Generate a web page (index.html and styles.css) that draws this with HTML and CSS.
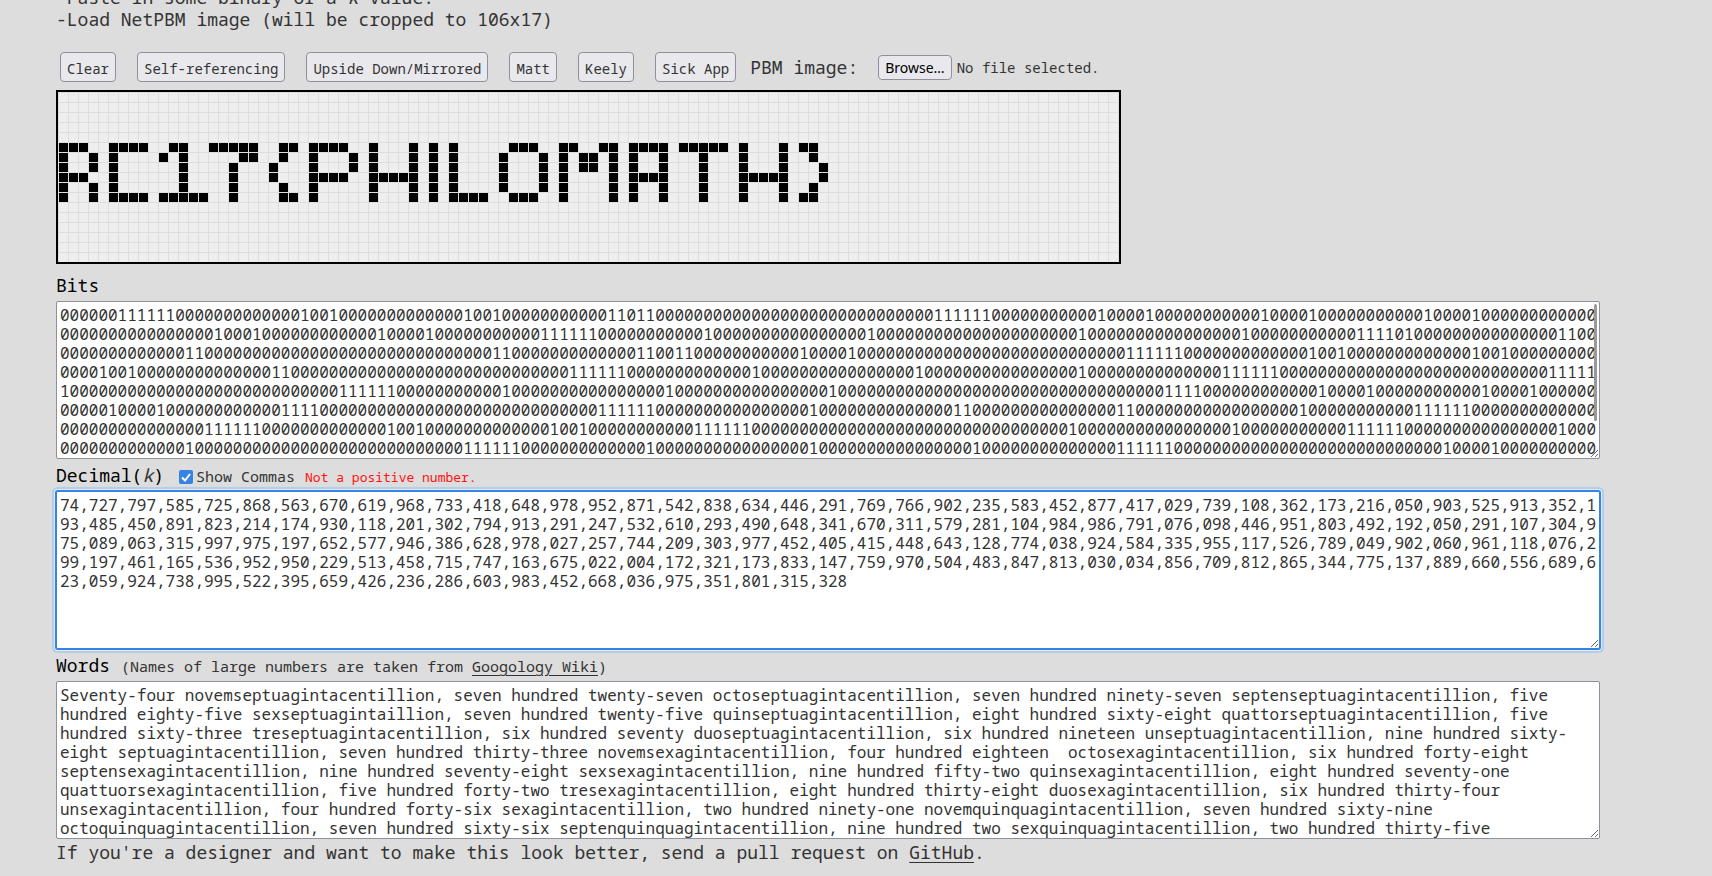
FILE: index.html
```html
<!DOCTYPE html>
<html lang="en">
<head>
<meta charset="utf-8">
<title>Tupper's self-referential formula</title>
<link rel="stylesheet" href="styles.css">
</head>
<body>
<main class="page">
  <div class="intro">
    <div>-Paste in some binary or a <i>k</i> value.</div>
    <div>-Load NetPBM image (will be cropped to 106x17)</div>
  </div>

  <div class="toolbar">
    <button type="button" class="btn">Clear</button>
    <button type="button" class="btn">Self-referencing</button>
    <button type="button" class="btn">Upside Down/Mirrored</button>
    <button type="button" class="btn">Matt</button>
    <button type="button" class="btn">Keely</button>
    <button type="button" class="btn">Sick App</button>
    <div class="file">
      <label class="file-label" for="pbm">PBM image:</label>
      <input type="file" id="pbm" hidden>
      <button type="button" class="browse" id="browse">Browse…</button>
      <span class="file-name">No file selected.</span>
    </div>
  </div>

  <svg class="grid" viewBox="0 0 1061 170" role="img" aria-label="Plot">
    <defs>
      <pattern id="cell" width="10" height="10" patternUnits="userSpaceOnUse">
        <rect width="10" height="10" fill="#ddd"/>
        <rect x="1" y="1" width="9" height="9" fill="#eee"/>
      </pattern>
    </defs>
    <rect width="1061" height="170" fill="url(#cell)"/>
    <path id="pixels" d=""/>
  </svg>

  <div class="heading"><label class="title" for="bits">Bits</label></div>
  <div class="field">
    <textarea class="area numeric" id="bits" spellcheck="false"></textarea>
    <span class="thumb"></span>
  </div>

  <div class="heading">
    <label class="title" for="decimal">Decimal(<i class="var">k</i>)</label>
    <label class="commas"><input type="checkbox" class="check" checked>Show Commas</label>
    <span class="error">Not a positive number.</span>
  </div>
  <div class="field">
    <textarea class="area numeric active" id="decimal" spellcheck="false">74,727,797,585,725,868,563,670,619,968,733,418,648,978,952,871,542,838,634,446,291,769,766,902,235,583,452,877,417,029,739,108,362,173,216,050,903,525,913,352,193,485,450,891,823,214,174,930,118,201,302,794,913,291,247,532,610,293,490,648,341,670,311,579,281,104,984,986,791,076,098,446,951,803,492,192,050,291,107,304,975,089,063,315,997,975,197,652,577,946,386,628,978,027,257,744,209,303,977,452,405,415,448,643,128,774,038,924,584,335,955,117,526,789,049,902,060,961,118,076,299,197,461,165,536,952,950,229,513,458,715,747,163,675,022,004,172,321,173,833,147,759,970,504,483,847,813,030,034,856,709,812,865,344,775,137,889,660,556,689,623,059,924,738,995,522,395,659,426,236,286,603,983,452,668,036,975,351,801,315,328</textarea>
  </div>

  <div class="heading">
    <label class="title" for="words">Words</label>
    <span class="note">(Names of large numbers are taken from <a href="#googology">Googology Wiki</a>)</span>
  </div>
  <div class="field">
    <textarea class="area" id="words" spellcheck="false">Seventy-four novemseptuagintacentillion, seven hundred twenty-seven octoseptuagintacentillion, seven hundred ninety-seven septenseptuagintacentillion, five hundred eighty-five sexseptuagintaillion, seven hundred twenty-five quinseptuagintacentillion, eight hundred sixty-eight quattorseptuagintacentillion, five hundred sixty-three treseptuagintacentillion, six hundred seventy duoseptuagintacentillion, six hundred nineteen unseptuagintacentillion, nine hundred sixty-eight septuagintacentillion, seven hundred thirty-three novemsexagintacentillion, four hundred eighteen  octosexagintacentillion, six hundred forty-eight septensexagintacentillion, nine hundred seventy-eight sexsexagintacentillion, nine hundred fifty-two quinsexagintacentillion, eight hundred seventy-one quattuorsexagintacentillion, five hundred forty-two tresexagintacentillion, eight hundred thirty-eight duosexagintacentillion, six hundred thirty-four unsexagintacentillion, four hundred forty-six sexagintacentillion, two hundred ninety-one novemquinquagintacentillion, seven hundred sixty-nine octoquinquagintacentillion, seven hundred sixty-six septenquinquagintacentillion, nine hundred two sexquinquagintacentillion, two hundred thirty-five</textarea>
  </div>

  <footer class="footer">If you're a designer and want to make this look better, send a pull request on <a href="#github">GitHub</a>.</footer>
</main>
<script src="script.js"></script>
</body>
</html>
```

FILE: styles.css
```css
* {
  box-sizing: border-box;
}

body {
  margin: 0;
  background: #ddd;
  color: #333;
  font-family: "Noto Sans Mono", "Liberation Mono", monospace;
  font-size: 18px;
  line-height: 22px;
}

a {
  color: inherit;
  text-underline-offset: 3px;
}

.page {
  margin: -14px 112px 0 56px;
}

.intro {
  margin-bottom: 22px;
}

.toolbar {
  display: flex;
  align-items: center;
  gap: 21px;
  padding-left: 4px;
  margin-bottom: 8px;
}

.btn,
.browse {
  border: 1px solid #8f8f9d;
  border-radius: 4px;
  background: #e9e9ed;
  color: #333;
  font-family: inherit;
  font-size: 14px;
  white-space: nowrap;
}

.btn {
  height: 30px;
  padding: 2px 6px 0;
}

.file {
  display: flex;
  align-items: center;
  white-space: nowrap;
}

.file-label {
  margin: 0 20px 0 -7px;
}

.browse {
  height: 25px;
  padding: 0 6px;
  color: #000;
  font-family: "Noto Sans", sans-serif;
}

.file-name {
  padding-top: 2px;
  margin-left: 5px;
  font-size: 14px;
}

.grid {
  display: block;
  box-sizing: content-box;
  width: 1061px;
  border: 2px solid #000;
  margin-bottom: 5px;
  shape-rendering: crispEdges;
}

.heading {
  display: flex;
  align-items: baseline;
  height: 32px;
  line-height: 32px;
}

.title {
  color: #000;
}

.var {
  color: #333;
}

.commas {
  margin-left: 15px;
  font-size: 15px;
}

.check {
  appearance: none;
  width: 14px;
  height: 14px;
  margin: 0 3px 0 0;
  border-radius: 2px;
  background: #3584e4 url("data:image/svg+xml,%3Csvg xmlns='http://www.w3.org/2000/svg' viewBox='0 0 14 14'%3E%3Cpath d='M3 7.5l3 3 5-6.500' fill='none' stroke='white' stroke-width='2'/%3E%3C/svg%3E");
  vertical-align: -2px;
}

.error {
  margin-left: 10px;
  color: #f11;
  font-size: 13px;
}

.note {
  margin-left: 11px;
  font-size: 15px;
}

.field {
  position: relative;
}

.area {
  display: block;
  width: 100%;
  height: 158px;
  margin: 0;
  padding: 4px 2px 2px 3px;
  border: 1px solid #8f8f9d;
  border-radius: 2px;
  background: #fff;
  color: #333;
  font-family: inherit;
  font-size: 16px;
  line-height: 19px;
  overflow: hidden;
  resize: both;
}

.numeric {
  line-break: anywhere;
}

.active {
  border-color: #3584e4;
  outline: none;
  box-shadow: 0 0 0 1px #3584e4, 0 0 0 2px #e4eaf2, 0 0 0 4px #b4cdeb;
}

.thumb {
  position: absolute;
  top: 3px;
  right: 3px;
  width: 3px;
  height: 117px;
  border-radius: 2px;
  background: #999;
}

.footer {
  padding-top: 2px;
}
```

FILE: script.js
```js
const COLUMNS = 106;
const ROWS = 17;
const CELL = 10;

// Filled columns of each row, as single columns or inclusive ranges.
const filled = {
  5: "0-2 5-8 11-12 15-19 22-23 25-28 31 35 37 39 45-47 50-51 54-55 57-60 62-66 68 72 74-75",
  6: "0 3 5 10 12 18-19 22 25 29 31 35 37 39 44 48 50 52-53 55 57 60 64 68 72 75",
  7: "0 3 5 12 17 21 25 29 31 35 37 39 44 48 50 52-53 55 57 60 64 68 72 76",
  8: "0-2 5 12 17 21 25-28 31-35 37 39 44 48 50 55 57-60 64 68-72 76",
  9: "0 3 5 12 17 22 25 31 35 37 39 44 48 50 55 57 60 64 68 72 75",
  10: "0 3 5-8 10-14 17 22-23 25 31 35 37 39-42 45-47 50 55 57 60 64 68 72 74-75"
};

const on = new Set();
for (const [row, spans] of Object.entries(filled)) {
  for (const span of spans.split(" ")) {
    const [first, last = first] = span.split("-").map(Number);
    for (let col = first; col <= last; col++) on.add(col + "," + row);
  }
}

// Bits run column by column, from the bottom row up.
let bits = "";
let path = "";
for (let col = 0; col < COLUMNS; col++) {
  for (let row = ROWS - 1; row >= 0; row--) {
    const set = on.has(col + "," + row);
    bits += set ? "1" : "0";
    if (set) path += `M${col * CELL + 1} ${row * CELL + 1}h9v9h-9z`;
  }
}
document.getElementById("pixels").setAttribute("d", path);
document.getElementById("bits").value = bits;

document.getElementById("browse").addEventListener("click", () => {
  document.getElementById("pbm").click();
});
```
